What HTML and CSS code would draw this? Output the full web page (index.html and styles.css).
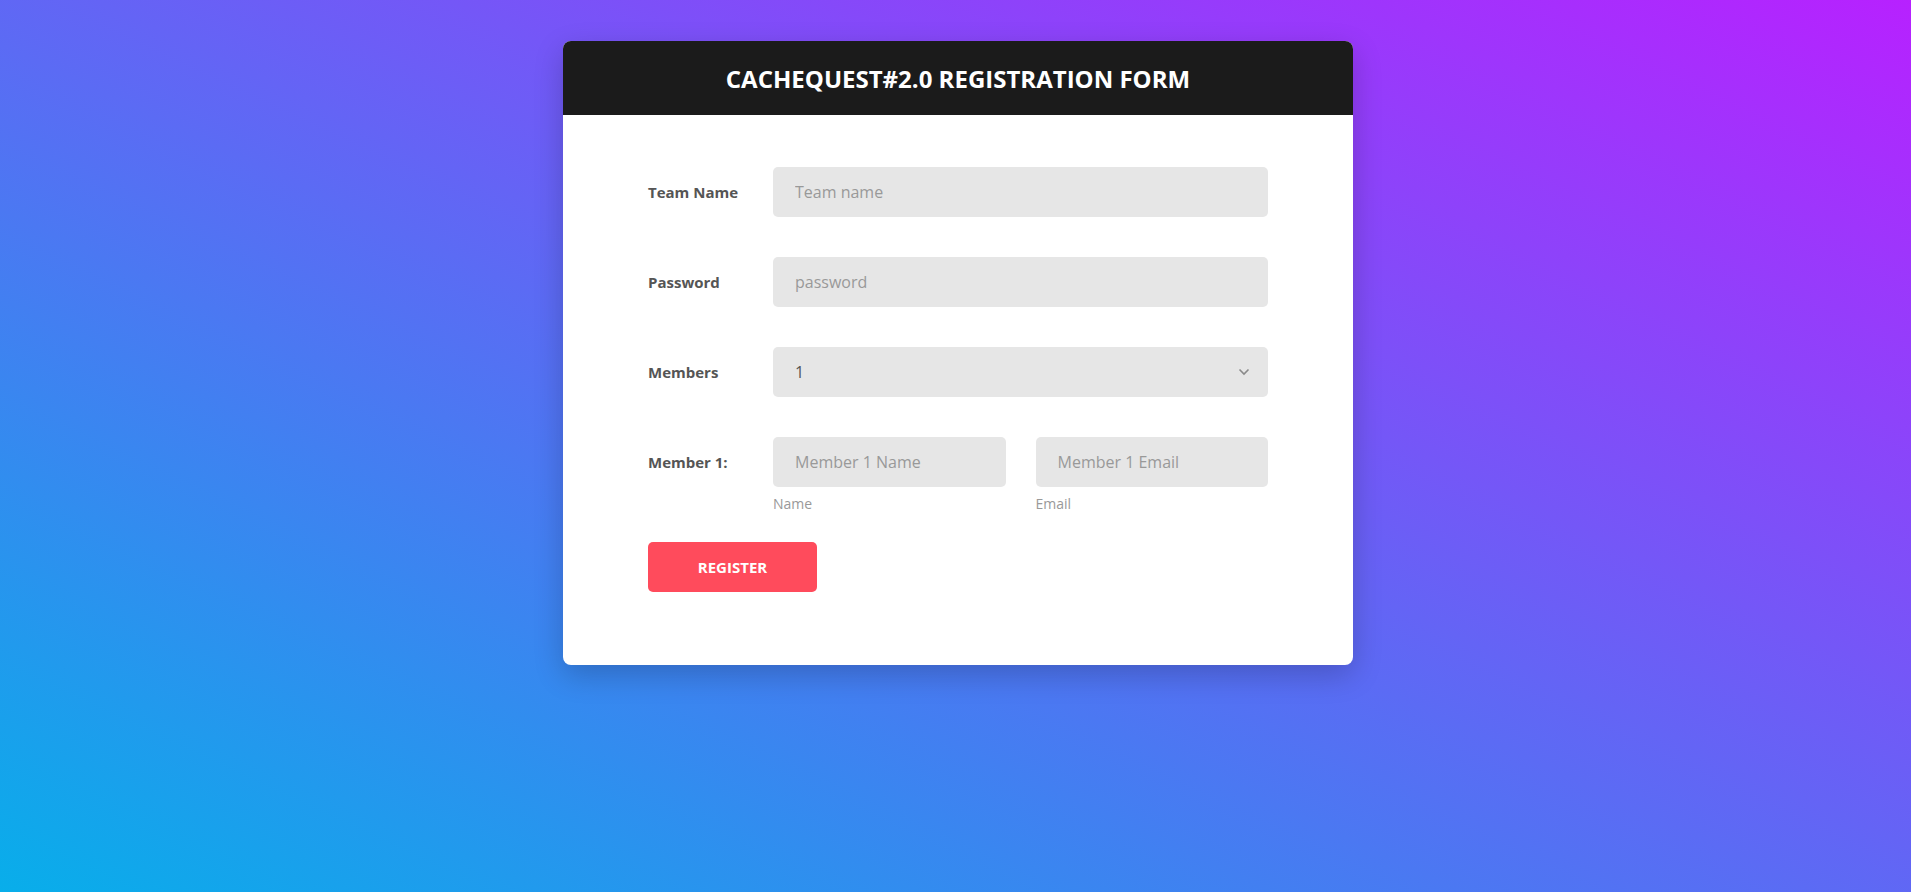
FILE: index.html
```html
<!DOCTYPE html>
<html lang="en">
<head>
<meta charset="utf-8">
<title>CacheQuest#2.0 Registration</title>
<link rel="stylesheet" href="styles.css">
</head>
<body>
<div class="page">
  <div class="card">
    <div class="card-header">
      <h1 class="title">CACHEQUEST#2.0 REGISTRATION FORM</h1>
    </div>
    <form class="card-body">
      <div class="row">
        <label class="label">Team Name</label>
        <div class="field">
          <input class="input" type="text" placeholder="Team name">
        </div>
      </div>
      <div class="row">
        <label class="label">Password</label>
        <div class="field">
          <input class="input" type="password" placeholder="password">
        </div>
      </div>
      <div class="row">
        <label class="label">Members</label>
        <div class="field select-wrap">
          <select class="input select">
            <option>1</option>
            <option>2</option>
            <option>3</option>
            <option>4</option>
          </select>
          <svg class="chevron" width="12" height="8" viewBox="0 0 12 8"><path d="M1.5 1.5 L6 6 L10.5 1.5" fill="none" stroke="#8a8a8a" stroke-width="1.6"/></svg>
        </div>
      </div>
      <div class="row row-member">
        <label class="label">Member 1:</label>
        <div class="field split">
          <div class="sub">
            <input class="input" type="text" placeholder="Member 1 Name">
            <span class="hint">Name</span>
          </div>
          <div class="sub">
            <input class="input" type="email" placeholder="Member 1 Email">
            <span class="hint">Email</span>
          </div>
        </div>
      </div>
      <div class="actions">
        <button class="btn" type="button">REGISTER</button>
      </div>
    </form>
  </div>
</div>
</body>
</html>
```
FILE: styles.css
```css
html, body {
  margin: 0;
  padding: 0;
  height: 100%;
}
body {
  font-family: "Open Sans", "Liberation Sans", sans-serif;
  background: linear-gradient(to top right, #08aeea 0%, #b721ff 100%);
  min-height: 892px;
}
.page {
  display: flex;
  justify-content: center;
  padding-top: 41px;
  padding-left: 5px;
}
.card {
  width: 790px;
  background: #fff;
  border-radius: 8px;
  overflow: hidden;
  box-shadow: 0 10px 30px rgba(0, 0, 0, 0.2);
}
.card-header {
  height: 74px;
  background: #1b1b1b;
  display: flex;
  align-items: center;
  justify-content: center;
}
.title {
  margin: 0;
  color: #fff;
  font-size: 24px;
  font-weight: 700;
  letter-spacing: 0;
}
.card-body {
  margin: 0;
  padding: 52px 85px 73px 85px;
  display: flex;
  flex-direction: column;
}
.row {
  display: flex;
  align-items: center;
  margin-bottom: 40px;
}
.row-member {
  align-items: flex-start;
  margin-bottom: 29px;
}
.row-member .label {
  line-height: 50px;
}
.label {
  width: 125px;
  flex: none;
  font-size: 15px;
  font-weight: 700;
  color: #555;
}
.field {
  flex: 1;
  position: relative;
}
.input {
  display: block;
  width: 100%;
  box-sizing: border-box;
  height: 50px;
  border: none;
  outline: none;
  border-radius: 5px;
  background: #e6e6e6;
  padding: 0 22px;
  font-family: "Open Sans", "Liberation Sans", sans-serif;
  font-size: 16px;
  color: #555;
}
.input::placeholder {
  color: #999;
}
.select {
  appearance: none;
  -webkit-appearance: none;
  color: #555;
}
.chevron {
  position: absolute;
  right: 18px;
  top: 21px;
  pointer-events: none;
}
.split {
  display: flex;
  gap: 30px;
}
.sub {
  flex: 1;
  display: flex;
  flex-direction: column;
}
.hint {
  margin-top: 7px;
  font-size: 14px;
  color: #999;
}
.actions {
  display: flex;
}
.btn {
  width: 169px;
  height: 50px;
  border: none;
  border-radius: 5px;
  background: #ff4b5c;
  color: #fff;
  font-family: "Open Sans", "Liberation Sans", sans-serif;
  font-size: 15px;
  font-weight: 700;
  cursor: pointer;
}
```
